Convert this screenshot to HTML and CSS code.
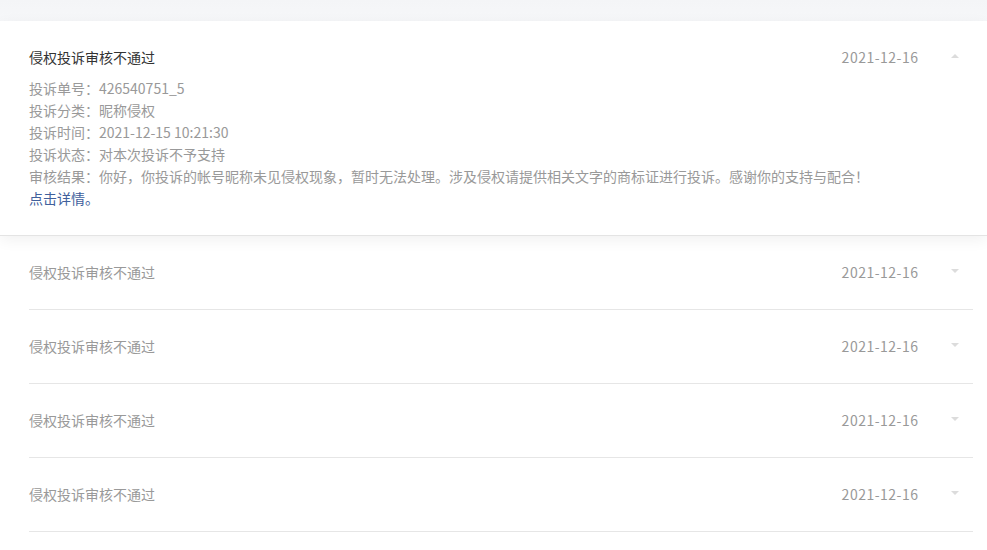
FILE: index.html
```html
<!DOCTYPE html>
<html lang="zh-CN">
<head>
<meta charset="utf-8">
<title>投诉记录</title>
<link rel="stylesheet" href="styles.css">
</head>
<body>
<div class="top-band"></div>
<div class="card">
  <div class="head">
    <div class="title">侵权投诉审核不通过</div>
    <div class="date">2021-12-16</div>
    <div class="arrow"><span class="tri up"></span></div>
  </div>
  <div class="details">
    <div>投诉单号：426540751_5</div>
    <div>投诉分类：昵称侵权</div>
    <div>投诉时间：2021-12-15 10:21:30</div>
    <div>投诉状态：对本次投诉不予支持</div>
    <div>审核结果：你好，你投诉的帐号昵称未见侵权现象，暂时无法处理。涉及侵权请提供相关文字的商标证进行投诉。感谢你的支持与配合！</div>
    <div class="link">点击详情。</div>
  </div>
</div>
<div class="list">
  <div class="row">
    <div class="title">侵权投诉审核不通过</div>
    <div class="date">2021-12-16</div>
    <div class="arrow"><span class="tri down"></span></div>
  </div>
  <div class="row">
    <div class="title">侵权投诉审核不通过</div>
    <div class="date">2021-12-16</div>
    <div class="arrow"><span class="tri down"></span></div>
  </div>
  <div class="row">
    <div class="title">侵权投诉审核不通过</div>
    <div class="date">2021-12-16</div>
    <div class="arrow"><span class="tri down"></span></div>
  </div>
  <div class="row">
    <div class="title">侵权投诉审核不通过</div>
    <div class="date">2021-12-16</div>
    <div class="arrow"><span class="tri down"></span></div>
  </div>
</div>
</body>
</html>
```
FILE: styles.css
```css
html, body {
  margin: 0;
  padding: 0;
  background: #ffffff;
}
body {
  font-family: "Noto Sans CJK SC", "Microsoft YaHei", sans-serif;
  font-size: 14px;
  line-height: 22px;
  color: #999999;
  overflow: hidden;
}
.top-band {
  height: 21px;
  background: linear-gradient(#f4f5f7, #f6f7f9);
}
.card {
  position: relative;
  background: #ffffff;
  padding: 25px 14px 26px 29px;
  border-bottom: 1px solid #e4e4e4;
  box-shadow: 0 4px 14px rgba(0, 0, 0, 0.06);
}
.head, .row {
  display: flex;
  align-items: center;
}
.title {
  flex: 1;
}
.card .title {
  color: #333333;
}
.date {
  color: #999999;
  letter-spacing: 0.5px;
  margin-right: 18.5px;
}
.arrow {
  width: 36px;
  display: flex;
  justify-content: center;
  align-items: center;
  height: 22px;
}
.tri {
  width: 0;
  height: 0;
  border-left: 4px solid transparent;
  border-right: 4px solid transparent;
}
.tri.up {
  border-bottom: 4px solid #dcdcdc;
  margin-bottom: 2px;
}
.tri.down {
  border-top: 4px solid #dcdcdc;
  margin-bottom: 2px;
}
.details {
  margin-top: 9px;
  color: #999999;
}
.link {
  color: #40609c;
}
.list {
  padding: 0 14px 0 29px;
}
.row {
  padding: 25px 0 26px;
  border-bottom: 1px solid #e6e6e6;
}
```
